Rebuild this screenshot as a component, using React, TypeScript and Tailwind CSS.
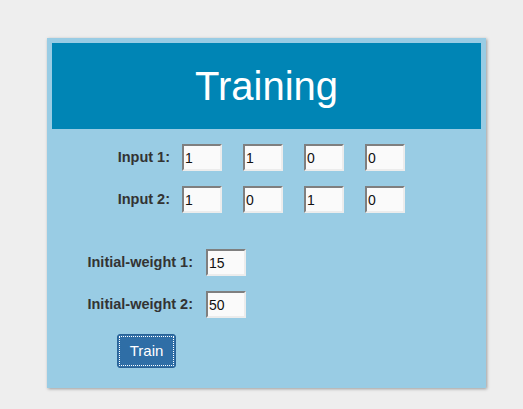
import React from "react";

const inputCls =
  "w-[40px] h-[27px] bg-[#fafafa] border-2 border-t-[#7f7f7f] border-l-[#7f7f7f] border-r-[#ececec] border-b-[#ececec] pl-[1px] pr-0 text-[14px] text-[#111111] outline-none [font-family:'Liberation_Sans',Arial,sans-serif]";

function Inp({ v }: { v: string }) {
  return <input className={inputCls} defaultValue={v} />;
}

export default function App() {
  return (
    <div className="w-[523px] h-[409px] bg-[#eeeeee] overflow-hidden pt-[38px] pl-[47px] [font-family:'Liberation_Sans',Arial,sans-serif]">
      <div className="w-[439px] h-[350px] bg-[#99cce4] p-[5px] shadow-[1px_1px_3px_rgba(0,0,0,0.35)]">
        <div className="h-[86px] bg-[#0085b5] flex items-center justify-center text-white text-[40px] leading-none pb-[1px]">
          Training
        </div>
        <div className="pt-[15px] flex flex-col">
          <div className="flex items-center h-[27px]">
            <div className="w-[118px] text-right font-bold text-[14.5px] text-[#333333]">Input 1:</div>
            <div className="ml-[12px] flex gap-[21px]">
              <Inp v="1" />
              <Inp v="1" />
              <Inp v="0" />
              <Inp v="0" />
            </div>
          </div>
          <div className="flex items-center h-[27px] mt-[15px]">
            <div className="w-[118px] text-right font-bold text-[14.5px] text-[#333333]">Input 2:</div>
            <div className="ml-[12px] flex gap-[21px]">
              <Inp v="1" />
              <Inp v="0" />
              <Inp v="1" />
              <Inp v="0" />
            </div>
          </div>
          <div className="flex items-center h-[27px] mt-[36px]">
            <div className="w-[141px] text-right font-bold text-[14.5px] text-[#333333]">Initial-weight 1:</div>
            <div className="ml-[13px] flex">
              <Inp v="15" />
            </div>
          </div>
          <div className="flex items-center h-[27px] mt-[15px]">
            <div className="w-[141px] text-right font-bold text-[14.5px] text-[#333333]">Initial-weight 2:</div>
            <div className="ml-[13px] flex">
              <Inp v="50" />
            </div>
          </div>
          <div className="mt-[16px] pl-[65px]">
            <button className="w-[59px] h-[34px] bg-[#2f6ea6] border border-[#2a6296] rounded-[3px] text-white text-[15px] outline-1 outline-dotted outline-white outline-offset-[-3px] [font-family:'Liberation_Sans',Arial,sans-serif]">
              Train
            </button>
          </div>
        </div>
      </div>
    </div>
  );
}
